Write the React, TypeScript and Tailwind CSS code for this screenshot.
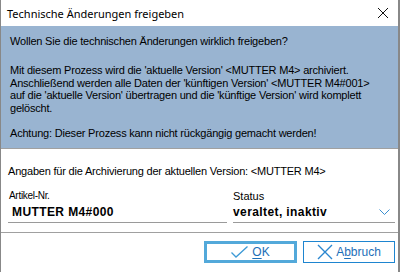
const ui = { fontFamily: '"Liberation Sans", Arial, sans-serif' }
const title = { fontFamily: '"Noto Sans", "Open Sans", sans-serif' }

function CloseIcon() {
  return (
    <svg width="12" height="12" viewBox="0 0 12 12" aria-hidden>
      <path d="M1 1L11 11M11 1L1 11" stroke="#111" strokeWidth="1" fill="none" />
    </svg>
  )
}

function CheckIcon() {
  return (
    <svg width="17" height="12" viewBox="0 0 17 12" aria-hidden>
      <path d="M0.5 6.5L5 11L16.5 0.5" stroke="#3d9ad6" strokeWidth="1.3" fill="none" />
    </svg>
  )
}

function CrossIcon() {
  return (
    <svg width="16" height="16" viewBox="0 0 16 16" aria-hidden>
      <path d="M1 1L15 15M15 1L1 15" stroke="#2a86cf" strokeWidth="1.4" fill="none" />
    </svg>
  )
}

function Chevron() {
  return (
    <svg width="11" height="7" viewBox="0 0 11 7" aria-hidden>
      <path d="M0.5 0.5L5.5 5.5L10.5 0.5" stroke="#3b8fd0" strokeWidth="1" fill="none" />
    </svg>
  )
}

export default function App() {
  return (
    <div className="flex h-[272px] w-[400px] flex-col overflow-hidden border-r-2 border-l border-[#888] bg-white text-black" style={ui}>
      <div className="flex h-[26px] shrink-0 items-center justify-between pr-[9px] pl-[6px]">
        <span className="text-[11px] leading-none" style={title}>
          Technische Änderungen freigeben
        </span>
        <CloseIcon />
      </div>

      <div className="shrink-0 border-b border-[#a0a0a0] bg-[#99b4d1] px-[9px] pt-[9px] pb-[9px] text-[11px] leading-[12.4px] tracking-[-0.2px]">
        <p>Wollen Sie die technischen Änderungen wirklich freigeben?</p>
        <p className="mt-[17px]">
          Mit diesem Prozess wird die 'aktuelle Version' &lt;MUTTER M4&gt; archiviert.
          <br />
          Anschließend werden alle Daten der 'künftigen Version' &lt;MUTTER M4#001&gt;
          <br />
          auf die 'aktuelle Version' übertragen und die 'künftige Version' wird komplett
          <br />
          gelöscht.
        </p>
        <p className="mt-[13px]">Achtung: Dieser Prozess kann nicht rückgängig gemacht werden!</p>
      </div>

      <div className="pt-[16px] pl-[7px] text-[11px] leading-[13px] tracking-[-0.2px]">
        Angaben für die Archivierung der aktuellen Version: &lt;MUTTER M4&gt;
      </div>

      <div className="mt-[12px] flex gap-[6px] pr-[3px] pl-[7px]">
        <div className="w-[219px]">
          <div className="pl-[1px] text-[10px] leading-[12px] tracking-[-0.3px]">Artikel-Nr.</div>
          <div className="mt-[3px] border-b border-[#9a9a9a] pb-[3px] pl-[4px] text-[12px] leading-[14px] font-bold tracking-[0.4px]">
            MUTTER M4#000
          </div>
        </div>
        <div className="flex-1">
          <div className="text-[11px] leading-[12px]">Status</div>
          <div className="mt-[3px] flex items-center justify-between border-b border-[#9a9a9a] pr-[5px] pb-[3px] text-[12px] leading-[14px] font-bold tracking-[0.4px]">
            <span>veraltet, inaktiv</span>
            <Chevron />
          </div>
        </div>
      </div>

      <div className="mt-[9px] border-t border-[#a0a0a0]" />

      <div className="mt-[8px] flex justify-end gap-[6px] pr-[3px]">
        <button className="flex h-[22px] w-[93px] items-center justify-center gap-[4px] border-[3px] border-[#53a9da] bg-white text-[12px] text-[#1d6fb8]">
          <CheckIcon />
          <span>
            <span className="underline underline-offset-2">O</span>K
          </span>
        </button>
        <button className="flex h-[22px] w-[92px] items-center justify-center gap-[3px] border border-[#1e85d0] bg-white text-[12px] text-[#1d6fb8]">
          <CrossIcon />
          <span>
            A<span className="underline underline-offset-2">b</span>bruch
          </span>
        </button>
      </div>
    </div>
  )
}
